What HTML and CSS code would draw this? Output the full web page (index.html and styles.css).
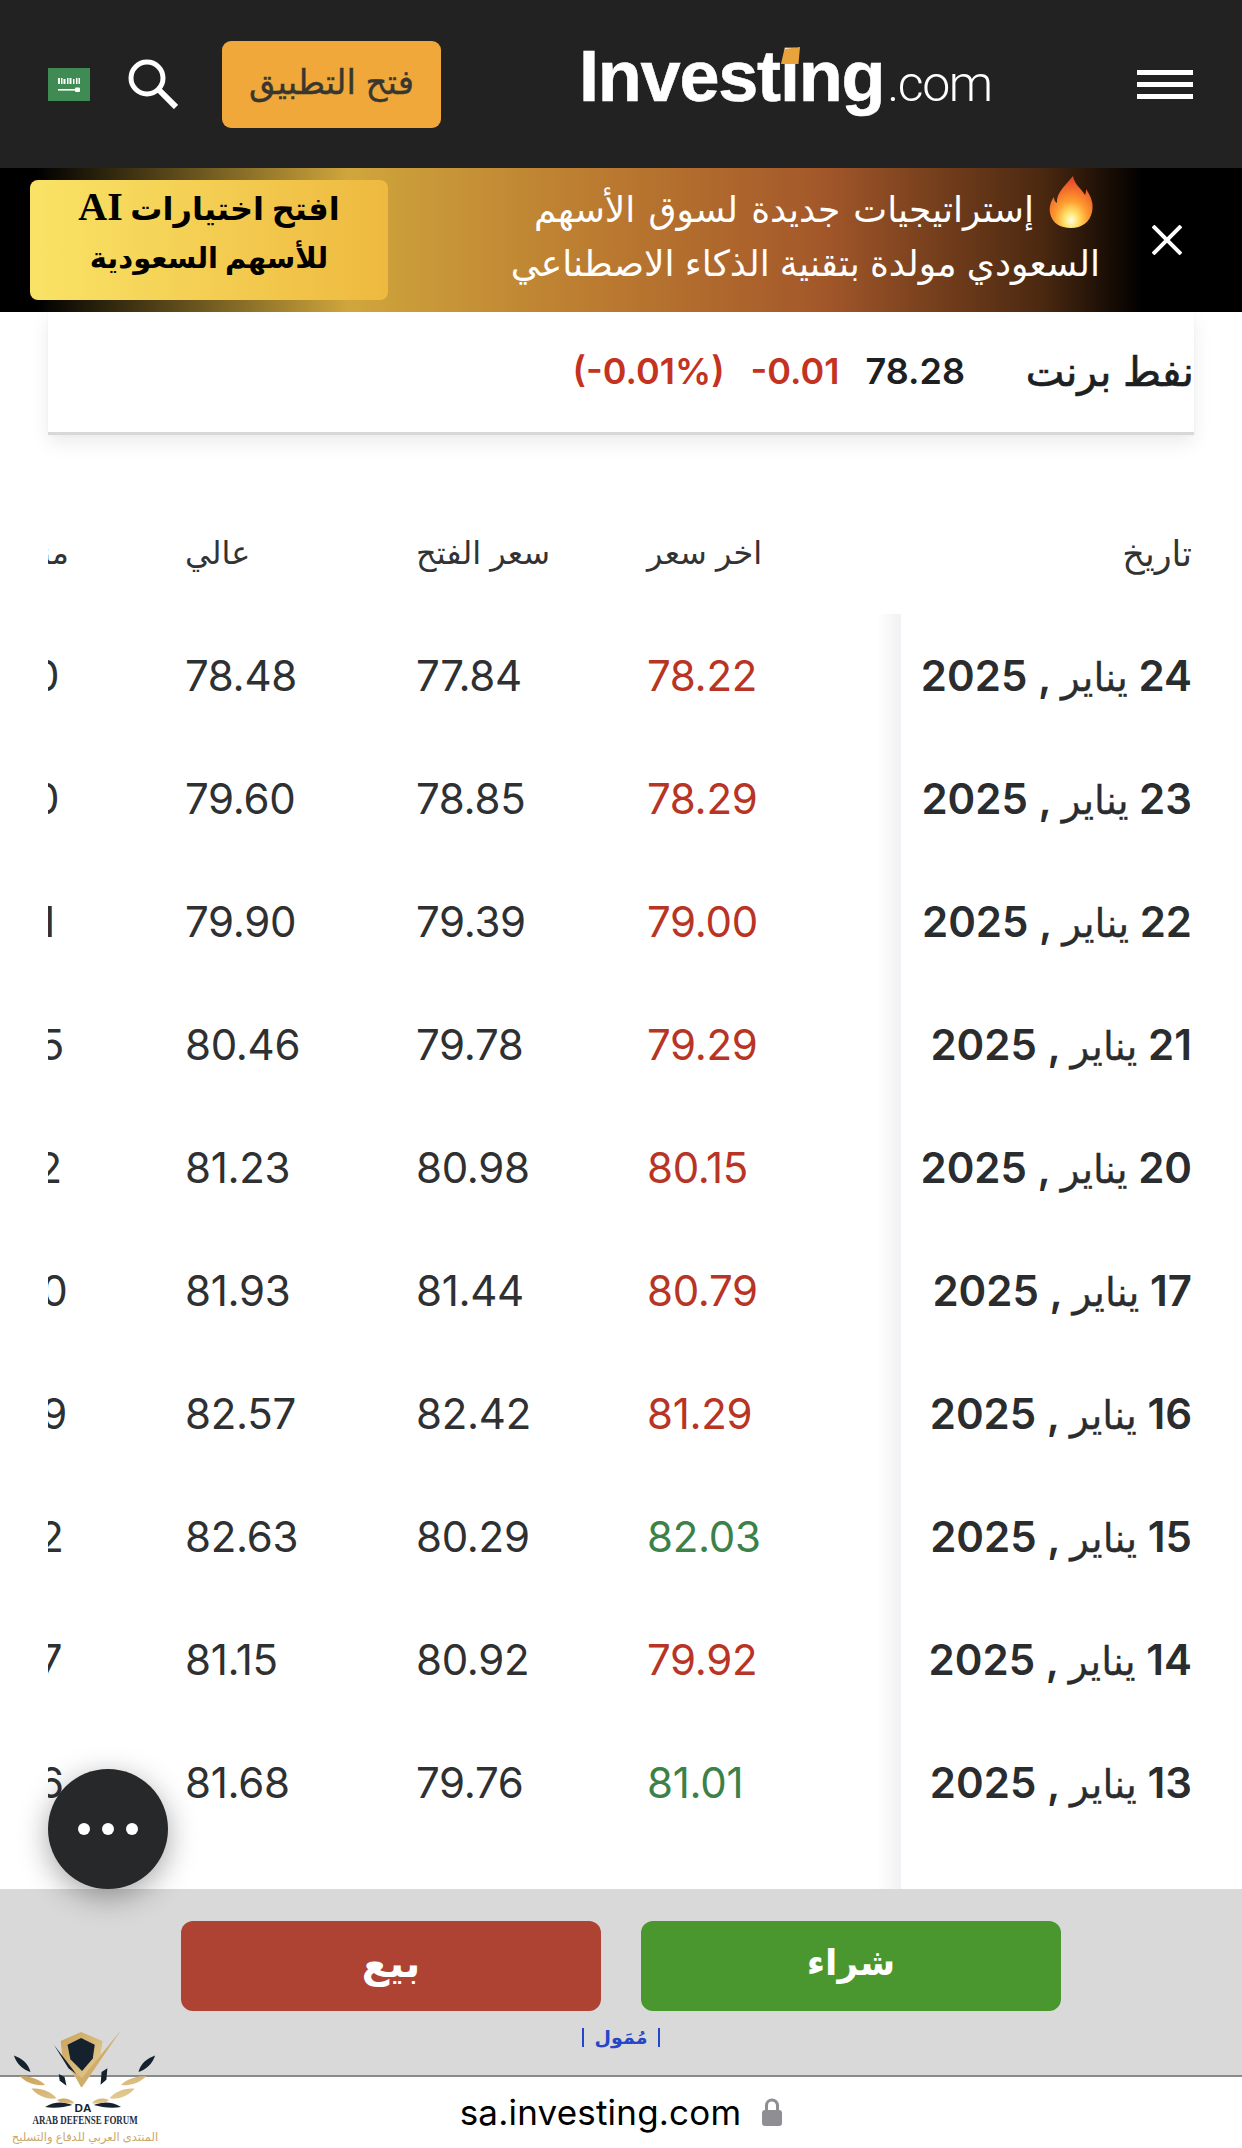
FILE: index.html
```html
<!DOCTYPE html>
<html lang="ar">
<head>
<meta charset="utf-8">
<title>نفط برنت</title>
<link rel="stylesheet" href="styles.css">
</head>
<body>
<div class="page">
  <header class="topbar" dir="ltr">
    <svg class="flag" viewBox="0 0 42 33"><rect width="42" height="33" fill="#3f8b53"/><g fill="#fff"><rect x="10" y="10" width="2" height="6"/><rect x="13" y="10" width="1.5" height="6"/><rect x="15.5" y="11" width="2" height="5"/><rect x="19" y="10" width="1.5" height="6"/><rect x="21.5" y="10" width="2" height="6"/><rect x="25" y="11" width="1.5" height="5"/><rect x="28" y="10" width="1.5" height="6"/><rect x="30.5" y="10" width="1.5" height="6"/><rect x="10" y="21" width="20" height="1.6"/><rect x="27" y="19.5" width="5" height="4.5" rx="1"/></g></svg>
    <svg class="search" viewBox="0 0 50 50" fill="none" stroke="#fff"><circle cx="19" cy="19" r="16" stroke-width="5"/><path d="M31 31 48 48" stroke-width="6"/></svg>
    <a class="open-app">فتح التطبيق</a>
    <div class="logo"><span class="logo-name">Investing</span><span class="logo-com">.com</span><i class="logo-tick"></i></div>
    <div class="burger"><i></i><i></i><i></i></div>
  </header>

  <section class="promo" dir="ltr">
    <a class="promo-cta" dir="rtl"><span class="cta-1">افتح اختيارات <b class="ai">AI</b></span><span class="cta-2">للأسهم السعودية</span></a>
    <div class="promo-text" dir="rtl">
      <div class="promo-line line-1"><svg class="fire" viewBox="0 0 44 52"><defs><radialGradient id="fl" cx="50%" cy="85%" r="80%"><stop offset="0" stop-color="#fffde8"/><stop offset=".2" stop-color="#ffe36a"/><stop offset=".48" stop-color="#ff9a2e"/><stop offset="1" stop-color="#e4452a"/></radialGradient></defs><path fill="url(#fl)" d="M24 0c1 8 8 12 12 19 1-2 1-4 1-6 5 7 8 15 6 23-2 10-10 16-21 16S3 47 1 37c-1-7 1-12 4-16 0 3 1 5 3 6C7 17 16 10 24 0Z"/></svg>إستراتيجيات جديدة لسوق الأسهم</div>
      <div class="promo-line">السعودي مولدة بتقنية الذكاء الاصطناعي</div>
    </div>
    <svg class="close" viewBox="0 0 30 30" stroke="#fff" stroke-width="4"><path d="M1 1 29 29M29 1 1 29"/></svg>
  </section>

  <main class="content" dir="rtl">
    <div class="quote">
      <h1 class="quote-name">نفط برنت</h1>
      <div class="quote-nums" dir="ltr"><span class="neg">(-0.01%)</span><span class="neg">-0.01</span><span>78.28</span></div>
    </div>

    <div class="table">
      <div class="row head">
        <div class="cell date-h">تاريخ</div><div class="cell">اخر سعر</div><div class="cell">سعر الفتح</div><div class="cell">عالي</div><div class="cell low-h">منخفض</div>
      </div>
      <div class="tbody">
        <div class="row"><div class="cell date"><bdi>24</bdi> <span class="mon">يناير</span> , <bdi>2025</bdi></div><div class="cell num neg-t">78.22</div><div class="cell num">77.84</div><div class="cell num">78.48</div><div class="cell num">77.50</div></div>
        <div class="row"><div class="cell date"><bdi>23</bdi> <span class="mon">يناير</span> , <bdi>2025</bdi></div><div class="cell num neg-t">78.29</div><div class="cell num">78.85</div><div class="cell num">79.60</div><div class="cell num">77.80</div></div>
        <div class="row"><div class="cell date"><bdi>22</bdi> <span class="mon">يناير</span> , <bdi>2025</bdi></div><div class="cell num neg-t">79.00</div><div class="cell num">79.39</div><div class="cell num">79.90</div><div class="cell num">78.81</div></div>
        <div class="row"><div class="cell date"><bdi>21</bdi> <span class="mon">يناير</span> , <bdi>2025</bdi></div><div class="cell num neg-t">79.29</div><div class="cell num">79.78</div><div class="cell num">80.46</div><div class="cell num">79.05</div></div>
        <div class="row"><div class="cell date"><bdi>20</bdi> <span class="mon">يناير</span> , <bdi>2025</bdi></div><div class="cell num neg-t">80.15</div><div class="cell num">80.98</div><div class="cell num">81.23</div><div class="cell num">79.72</div></div>
        <div class="row"><div class="cell date"><bdi>17</bdi> <span class="mon">يناير</span> , <bdi>2025</bdi></div><div class="cell num neg-t">80.79</div><div class="cell num">81.44</div><div class="cell num">81.93</div><div class="cell num">80.30</div></div>
        <div class="row"><div class="cell date"><bdi>16</bdi> <span class="mon">يناير</span> , <bdi>2025</bdi></div><div class="cell num neg-t">81.29</div><div class="cell num">82.42</div><div class="cell num">82.57</div><div class="cell num">80.89</div></div>
        <div class="row"><div class="cell date"><bdi>15</bdi> <span class="mon">يناير</span> , <bdi>2025</bdi></div><div class="cell num pos-t">82.03</div><div class="cell num">80.29</div><div class="cell num">82.63</div><div class="cell num">79.52</div></div>
        <div class="row"><div class="cell date"><bdi>14</bdi> <span class="mon">يناير</span> , <bdi>2025</bdi></div><div class="cell num neg-t">79.92</div><div class="cell num">80.92</div><div class="cell num">81.15</div><div class="cell num">79.27</div></div>
        <div class="row"><div class="cell date"><bdi>13</bdi> <span class="mon">يناير</span> , <bdi>2025</bdi></div><div class="cell num pos-t">81.01</div><div class="cell num">79.76</div><div class="cell num">81.68</div><div class="cell num">79.36</div></div>
      </div>
    </div>
  </main>

  <section class="trade">
    <div class="trade-btns" dir="ltr">
      <a class="btn sell">بيع</a>
      <a class="btn buy">شراء</a>
    </div>
    <div class="sponsored"><i></i><span>مُمَول</span><i></i></div>
  </section>

  <footer class="addressbar">
    <span class="url">sa.investing.com</span>
    <svg class="lock" viewBox="0 0 20 28"><path fill="none" stroke="#8e8e93" stroke-width="3" d="M4.5 13V7.5a5.5 5.5 0 0 1 11 0V13"/><rect y="12" width="20" height="16" rx="3" fill="#8e8e93"/></svg>
  </footer>

  <button class="fab" aria-label="more"><i></i><i></i><i></i></button>

  <div class="watermark">
    <svg class="wm-art" viewBox="0 0 150 90">
      <defs><linearGradient id="gd" x1="0" y1="0" x2="1" y2="1"><stop offset="0" stop-color="#cba45c"/><stop offset="1" stop-color="#e5cf9a"/></linearGradient></defs>
      <path fill="url(#gd)" d="M50 12 71 3 93 12 90 32 80 48 72 60 60 42 52 30Z"/>
      <path fill="#15222e" d="M57 16 71 9 85 16 83 30 72 43 60 31Z"/>
      <path fill="#d0ad6a" d="M112 1 84 42 71 60 63 44 72 50Z"/>
      <path fill="#15222e" d="M43 16 66 46 58 40ZM48 46l6 3 2 9-7-5ZM92 44l6-4-1 12-6 5Z"/>
      <path fill="#15222e" d="M2 27c8 3 15 8 17 17-7-2-15-9-17-17ZM147 27c-8 3-15 8-17 17 7-2 15-9 17-17Z"/>
      <path fill="url(#gd)" d="M8 48c10 0 20 3 26 9-8 2-20-2-26-9ZM138 48c-10 0-20 3-26 9 8 2 20-2 26-9ZM20 61c10-1 20 3 26 10-9 2-21-3-26-10ZM126 61c-10-1-20 3-26 10 9 2 21-3 26-10Z"/>
      <path fill="#15222e" d="M34 80c9-6 20-6 28-2-8 2-18 4-28 2ZM112 80c-9-6-20-6-28-2 8 2 18 4 28 2Z"/>
      <path fill="url(#gd)" d="M46 73c6-3 14-2 18 3-6 1-13 0-18-3ZM100 73c-6-3-14-2-18 3 6 1 13 0 18-3Z"/>
      <text class="wm-da" x="73" y="85" text-anchor="middle">DA</text>
    </svg>
    <div class="wm-en">ARAB DEFENSE FORUM</div>
    <div class="wm-ar">المنتدى العربي للدفاع والتسليح</div>
  </div>
</div>
</body>
</html>
```
FILE: styles.css
```css
* { box-sizing: border-box; }
html, body { margin: 0; padding: 0; }
body { font-family: Inter, "DejaVu Sans", sans-serif; color: #2a2c2e; background: #fff; }
.page { position: relative; width: 1242px; height: 2148px; overflow: hidden; display: flex; flex-direction: column; }

.topbar { height: 168px; flex: none; background: #222; display: flex; align-items: center; padding-left: 48px; padding-right: 49px; }
.flag { width: 42px; height: 33px; flex: none; margin-top: 1px; }
.search { width: 50px; height: 50px; flex: none; margin-left: 38px; }
.open-app { width: 219px; height: 87px; flex: none; margin-left: 44px; border-radius: 9px; background: #f0a83a; color: #38372f; display: flex; align-items: center; justify-content: center; font-size: 34px; padding-bottom: 6px; -webkit-text-stroke: .4px #38372f; }
.logo { position: relative; margin-left: 138px; margin-bottom: 16px; width: 405px; height: 100px; display: flex; align-items: baseline; color: #fff; line-height: 100px; }
.logo-name { font-family: "Liberation Sans", sans-serif; font-weight: 700; font-size: 72px; letter-spacing: -1.2px; -webkit-text-stroke: .6px #fff; }
.logo-com { font-family: Roboto, sans-serif; font-weight: 300; font-size: 50px; letter-spacing: -1.4px; margin-left: 3px; }
.logo-tick { position: absolute; left: 202px; top: 21px; width: 19px; height: 17px; background: #e8a33d; clip-path: polygon(18% 12%, 100% 0, 92% 100%, 0 100%); }
.burger { margin-left: auto; width: 56px; display: flex; flex-direction: column; gap: 7px; }
.burger i { display: block; height: 5px; background: #fff; }

.promo { position: relative; height: 144px; flex: none; display: flex; align-items: center; background: linear-gradient(90deg, #000 3%, #cfa63c 28%, #b9772f 50%, #a4582a 66%, #4a2810 84%, #000 92%); padding-left: 30px; }
.promo-cta { width: 358px; height: 120px; flex: none; border-radius: 8px; background: linear-gradient(90deg, #f9e366, #eeb93f); color: #000; font-weight: 700; text-align: center; display: flex; flex-direction: column; padding-top: 1px; }
.cta-1 { font-size: 32px; line-height: 52px; }
.cta-2 { font-size: 29px; line-height: 46px; }
.ai { font-family: "Liberation Serif", serif; font-size: 40px; }
.promo-text { flex: none; width: 642px; margin-left: 70px; margin-bottom: 14px; color: #fff; font-size: 36px; line-height: 54px; text-align: right; }
.promo-line { white-space: nowrap; }
.line-1 { word-spacing: 3px; }
.fire { width: 46px; height: 52px; vertical-align: -6px; margin-left: 14px; margin-right: 6px; }
.close { position: absolute; right: 60px; top: 57px; width: 30px; height: 30px; }

.content { flex: 1; min-height: 0; display: flex; flex-direction: column; background: #fff; }
.quote { flex: none; margin: 0 48px; height: 123px; background: #fff; border-bottom: 3px solid #d8d8d8; box-shadow: 0 8px 18px rgba(0,0,0,.08), 0 0 4px rgba(0,0,0,.03); display: flex; align-items: center; justify-content: flex-start; padding-bottom: 2px; }
.quote-name { margin: 0; width: 229px; flex: none; font-size: 41px; font-weight: 400; -webkit-text-stroke: .7px #1d1f22; color: #1d1f22; white-space: nowrap; }
.quote-nums { display: flex; gap: 26px; font-size: 36px; font-weight: 600; color: #1d1f22; }
.neg { color: #c3331f; }

.table { flex: 1; min-height: 0; margin: 76px 0 0 48px; overflow: hidden; display: flex; flex-direction: column; }
.row { display: grid; grid-template-columns: 341px 254px repeat(3, 231px); height: 123px; align-items: center; }
.row.head { height: 103px; flex: none; padding-bottom: 20px; font-size: 32px; color: #333; }
.low-h { padding-left: 12px; }
.tbody { position: relative; flex: 1; min-height: 0; }
.tbody::before { content: ""; position: absolute; right: 341px; top: 0; bottom: 0; width: 24px; background: linear-gradient(90deg, rgba(240,240,243,0), #f1f1f4); }
.cell { text-align: left; white-space: nowrap; }
.date-h, .date { text-align: right; padding-right: 50px; }
.date-h { font-size: 35px; }
.date { font-size: 42px; font-weight: 600; color: #2a2c2e; }
.mon { font-size: 39px; font-weight: 400; -webkit-text-stroke: .3px #2a2c2e; }
.num { direction: ltr; font-size: 42px; letter-spacing: -.3px; color: #2e3032; }
.neg-t { color: #b83424; }
.pos-t { color: #3b8148; }

.trade { height: 186px; flex: none; background: #d9d9d9; padding-top: 32px; display: flex; flex-direction: column; align-items: center; }
.trade-btns { display: flex; gap: 40px; }
.btn { width: 420px; height: 90px; border-radius: 12px; color: #fff; font-size: 40px; font-weight: 700; display: flex; align-items: center; justify-content: center; padding-bottom: 8px; }
.sell { background: #ae4233; }
.buy { background: #4b972f; font-size: 36px; }
.sponsored { display: flex; align-items: center; gap: 11px; margin-top: 16px; color: #2347c8; font-size: 19px; font-weight: 700; height: 20px; }
.sponsored i { display: block; width: 2px; height: 19px; background: #2347c8; }

.addressbar { height: 73px; flex: none; border-top: 2px solid #8a8a8a; background: #fff; display: flex; align-items: center; justify-content: center; gap: 21px; padding-bottom: 2px; }
.url { font-family: Inter, sans-serif; font-size: 35px; color: #000; letter-spacing: .2px; }
.lock { width: 20px; height: 28px; }

.fab { position: absolute; left: 48px; bottom: 259px; width: 120px; height: 120px; border: 0; padding: 0; border-radius: 50%; background: #26282a; box-shadow: 0 8px 30px rgba(0,0,0,.35); display: flex; align-items: center; justify-content: center; gap: 12px; }
.fab i { display: block; width: 12px; height: 12px; border-radius: 50%; background: #fff; }

.watermark { position: absolute; left: 10px; top: 2029px; width: 150px; display: flex; flex-direction: column; align-items: center; }
.wm-art { width: 146px; height: 88px; display: block; margin-bottom: -4px; }
.wm-da { font-family: "Liberation Sans", sans-serif; font-weight: 700; font-size: 12px; fill: #15222e; }
.wm-en { font-family: "Liberation Serif", serif; font-weight: 700; font-size: 13px; color: #1f2e3b; line-height: 13px; white-space: nowrap; transform: scale(.69, 1); }
.wm-ar { font-size: 11.5px; line-height: 18px; color: #c9a86a; white-space: nowrap; margin-top: 2px; }
```
